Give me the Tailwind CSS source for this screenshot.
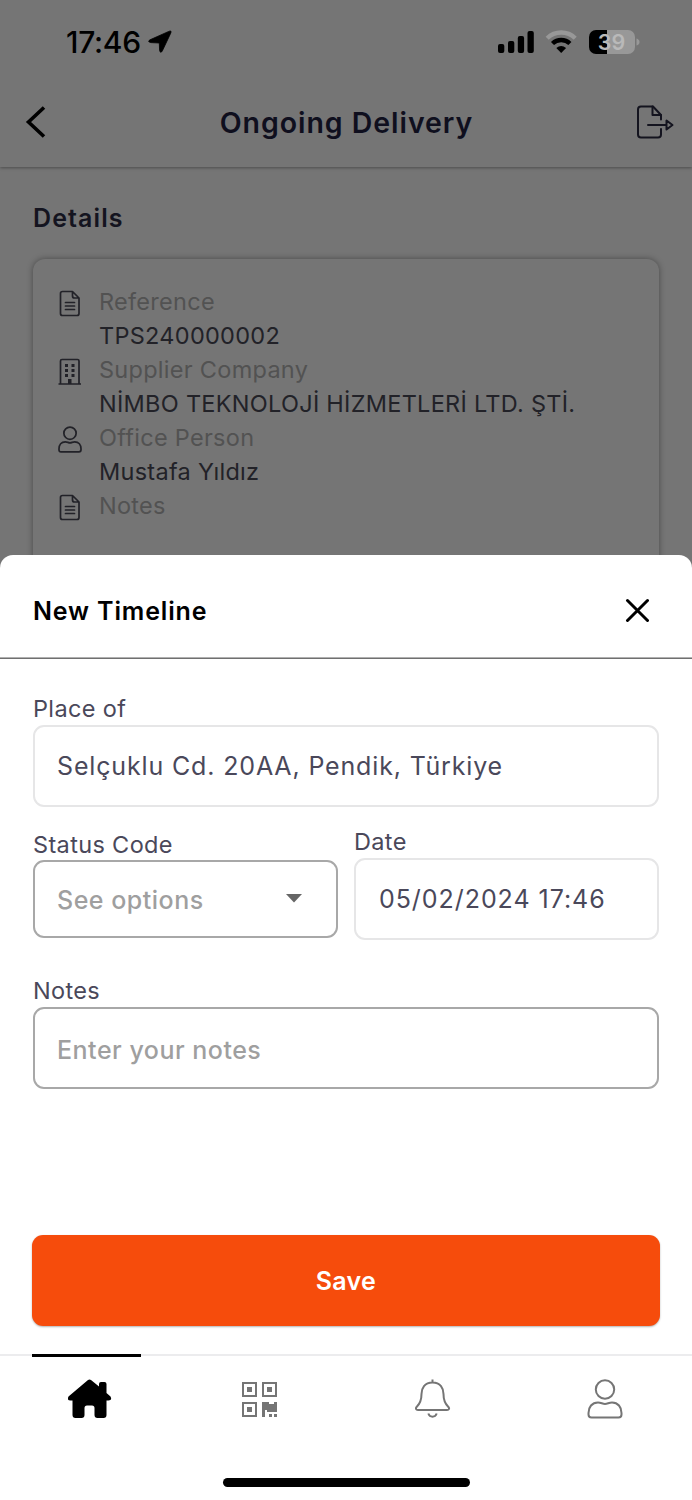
<!DOCTYPE html>
<html lang="en">
<head>
<meta charset="utf-8">
<title>Ongoing Delivery</title>
<script src="https://cdn.jsdelivr.net/npm/@tailwindcss/browser@4"></script>
</head>
<body class="bg-white">
<svg class="hidden">
  <symbol id="doc" viewBox="0 0 24 28"><g fill="none" stroke="currentColor" stroke-width="1.7" stroke-linejoin="round" stroke-linecap="round"><path d="M4.500 1.500H14.500L21 8V23.500Q21 25.500 19 25.500H4.500Q2.500 25.500 2.500 23.500V3.500Q2.500 1.500 4.500 1.500ZM14.500 1.500V6Q14.500 8 16.500 8H21"/><path d="M7.500 12.500h9M7.500 16h9M7.500 19.500h9"/></g></symbol>
  <symbol id="person" viewBox="0 0 36 40"><g fill="none" stroke="currentColor" stroke-linejoin="round"><circle cx="18" cy="10.500" r="9.200"/><path d="M11 23.500C14 23.500 15.500 25 18 25S22 23.500 25 23.500C31 23.500 34.500 28 34.500 34V35.500Q34.500 38.500 31.500 38.500H4.500Q1.500 38.500 1.500 35.500V34C1.500 28 5 23.500 11 23.500Z"/></g></symbol>
</svg>
<div class="flex h-[1500px] w-[692px] flex-col overflow-hidden bg-[#757575] font-['Inter',sans-serif]">
  <section class="flex h-[555px] shrink-0 flex-col overflow-hidden">
    <header class="h-[167px] shrink-0 shadow-[0_1px_3px_rgba(0,0,0,0.35)]">
      <div class="flex h-[83px] items-center pl-[66px] pr-[52px]">
        <span class="w-[82px] text-[30px] font-medium leading-none tracking-[-0.3px] text-black">17:46</span>
        <svg class="h-[24px] w-[24px]" viewBox="0 0 24 24"><path d="M20.800 1.400Q24 0 22.700 3.200L14.400 20.800Q12.500 24 11.600 20.500L11.300 13L2.800 12.600Q-1 11.800 2 9.800Z" fill="#000" stroke="#000" stroke-width=".8" stroke-linejoin="round"/></svg>
        <div class="ml-auto flex items-center">
          <svg class="h-[24px] w-[142px]" viewBox="498 29 142 24">
            <rect x="498" y="43" width="6.300" height="9" rx="2"/><rect x="508" y="40" width="6.300" height="12" rx="2"/><rect x="517.800" y="35" width="6.300" height="17" rx="2"/><rect x="527.500" y="30" width="6.300" height="22" rx="2"/>
            <path d="M547.200 37.200A20 20 0 0 1 575.200 37.200" fill="none" stroke="#989898" stroke-width="4.400"/>
            <path d="M552.500 42.500A12.500 12.500 0 0 1 569.900 42.500" fill="none" stroke="#000" stroke-width="4.400"/>
            <path d="M556.300 47Q561.200 42.800 566.100 47L561.200 52Z"/>
            <path d="M596 29h11v24h-11a7 7 0 0 1-7-7v-10a7 7 0 0 1 7-7z"/>
            <path d="M607 29h21a7 7 0 0 1 7 7v10a7 7 0 0 1-7 7h-21z" fill="#989898"/>
            <path d="M636.500 37.500q3 1 3 3.500t-3 3.500z" fill="#989898"/>
            <text x="611.500" y="48.700" text-anchor="middle" font-size="21.500" font-weight="600" fill="#b9b9b9">39</text>
          </svg>
        </div>
      </div>
      <div class="flex h-[78px] items-center justify-between pl-[25px] pr-[18px]">
        <svg class="h-[32px] w-[32px]" viewBox="0 0 32 32"><path d="M19 1.500L3.500 16L19 30.500" fill="none" stroke="#000" stroke-width="3.600"/></svg>
        <h1 class="pt-[3px] text-[28.5px] font-semibold leading-none tracking-[0.95px] text-[#0f0f1e]">Ongoing Delivery</h1>
        <svg class="h-[34px] w-[38px]" viewBox="0 0 38 34"><g fill="none" stroke="#14141f" stroke-width="2" stroke-linejoin="round" stroke-linecap="round"><path d="M25 14.500V10L17 1.500H5Q2 1.500 2 4.500V29.500Q2 32.500 5 32.500H22Q25 32.500 25 29.500V24"/><path d="M16.500 1.500V10H25M12 20H30M30.500 15.500V24.500L36.500 20Z"/></g></svg>
      </div>
    </header>
    <main class="flex flex-col px-[33px] pt-[34px]">
      <h2 class="h-[34px] text-[25px] font-semibold leading-[34px] tracking-[1.1px] text-[#141420]">Details</h2>
      <div class="mt-[24px] grid h-[400px] grid-cols-[66px_1fr] content-start rounded-[12px] pt-[26px] text-[23.5px] leading-[34px] tracking-[0.28px] text-[#222228] shadow-[0_0_6px_rgba(0,0,0,0.38)]">
        <svg class="ml-[25px] mt-[5px] h-[28px] w-[24px]"><use href="#doc"/></svg>
        <div><p class="text-[#525252]">Reference</p><p>TPS240000002</p></div>
        <svg class="ml-[25px] mt-[5px] h-[28px] w-[24px]" viewBox="0 0 24 28"><path d="M2.500 26V3Q2.500 1.500 4 1.500H19.500Q21 1.500 21 3V26M.500 26H23" fill="none" stroke="currentColor" stroke-width="1.700"/><path d="M7 6h3v3h-3zM13.500 6h3v3h-3zM7 11h3v3h-3zM13.500 11h3v3h-3zM7 16h3v3h-3zM13.500 16h3v3h-3zM10 21h3.500v5h-3.500z" fill="currentColor"/></svg>
        <div><p class="text-[#525252]">Supplier Company</p><p class="whitespace-nowrap">NİMBO TEKNOLOJİ HİZMETLERİ LTD. ŞTİ.</p></div>
        <svg class="ml-[25px] mt-[5px] h-[27px] w-[24px] stroke-[2.6]"><use href="#person"/></svg>
        <div><p class="text-[#525252]">Office Person</p><p>Mustafa Yıldız</p></div>
        <svg class="ml-[25px] mt-[5px] h-[28px] w-[24px]"><use href="#doc"/></svg>
        <div><p class="text-[#525252]">Notes</p></div>
      </div>
    </main>
  </section>

  <section class="flex h-[799px] shrink-0 flex-col rounded-t-[13px] bg-white">
    <div class="flex h-[102px] shrink-0 items-center justify-between pl-[33px] pr-[43px] pt-[9px]">
      <h2 class="mt-[2px] text-[25px] font-semibold leading-none tracking-[0.85px] text-black">New Timeline</h2>
      <svg class="mb-[2px] h-[24px] w-[24px]" viewBox="0 0 24 24"><path d="M2.500 2.500L22.500 22.500M22.500 2.500L2.500 22.500" stroke="#000" stroke-width="3" stroke-linecap="round"/></svg>
    </div>
    <div class="h-[2px] shrink-0 border-b border-t border-b-[#6f6f6f] border-t-[#b0b0b0]"></div>
    <form class="flex flex-col px-[33px] text-[23.5px] tracking-[0.35px] text-[#4a485a]">
      <label class="mt-[33px] h-[33px] leading-[33px]">Place of</label>
      <div class="flex h-[82px] items-center rounded-[11px] border-2 border-[#e6e6e7] pl-[22px] pt-[2px] text-[25px] tracking-[0.85px]">Selçuklu Cd. 20AA, Pendik, Türkiye</div>
      <div class="mt-[18px] grid grid-cols-2 gap-4">
        <div class="flex flex-col pt-[3px]">
          <label class="h-[32px] pt-px leading-[32px]">Status Code</label>
          <div class="flex h-[78px] items-center justify-between rounded-[11px] border-2 border-[#a8a8a8] pl-[22px] pr-[34px] text-[25px] tracking-[0.5px] text-[#9f9f9f]"><span class="pt-[4px] font-medium">See options</span>
            <svg class="mb-px h-[9px] w-[16px]" viewBox="0 0 16 9"><path d="M0 0H16L8 8.500Z" fill="#666"/></svg></div>
        </div>
        <div class="flex flex-col">
          <label class="h-[33px] leading-[33px]">Date</label>
          <div class="flex h-[82px] items-center rounded-[11px] border-2 border-[#e6e6e7] pl-[23px] pt-[2px] text-[25px] tracking-[0.95px]">05/02/2024 17:46</div>
        </div>
      </div>
      <label class="mt-[34px] h-[33px] leading-[33px]">Notes</label>
      <div class="flex h-[82px] items-center rounded-[11px] border-2 border-[#a8a8a8] pl-[22px] pt-[5px] text-[25px] font-medium tracking-[0.5px] text-[#9f9f9f]">Enter your notes</div>
      <button type="button" class="-mx-px mt-[146px] h-[91px] rounded-[11px] bg-[#f64c0c] pt-[2px] text-[25px] font-semibold tracking-[0.3px] text-white shadow-[0_1px_2px_rgba(0,0,0,0.3)]">Save</button>
    </form>
  </section>

  <nav class="flex h-[146px] shrink-0 flex-col border-t-2 border-[#ececee] bg-white text-[#757575]">
    <div class="-mt-[2px] ml-[32px] h-[3px] w-[109px] shrink-0 bg-black"></div>
    <div class="grid h-[84px] grid-cols-4 place-items-center">
      <svg class="ml-[6px] h-[40px] w-[44px]" viewBox="0.5 0 44 40"><path d="M20.500 1Q22 0 23.500 1L31.500 7.500V5Q31.500 3 33.500 3H37Q39 3 39 5V14L43 17.500Q45 21.500 41 21.500H39V36Q39 39 36 39H30Q27 39 27 36V29Q27 26.500 24.500 26.500H19.500Q17 26.500 17 29V36Q17 39 14 39H8Q5 39 5 36V21.500H3Q-1 21.500 1 17.500Z" fill="#000"/></svg>
      <svg class="h-[35px] w-[35px]" viewBox="0 0 35 35"><g fill="none" stroke="currentColor" stroke-width="2"><path d="M1 1h13v13H1zM21 1h13v13H21zM1 21h13v13H1z"/></g><path fill="currentColor" d="M5 5h5v5H5zM25 5h5v5h-5zM5 25h5v5H5zM20 20h7v2h5v-2h3v10h-10v-2h-2v7h-3zM27 32h3v3h-3zM32 32h3v3h-3z"/></svg>
      <svg class="h-[40px] w-[36px]" viewBox="0.5 0 36 40"><path d="M18 .500V3M13.800 34.500Q15 37.700 18 37.700T22.200 34.500M18 3.500C10 3.500 7 9.500 7 15C7 22 5.500 24.500 2.500 27.500C.500 29.500 1.500 31 3.500 31H32.500C34.500 31 35.500 29.500 33.500 27.500C30.500 24.500 29 22 29 15C29 9.500 26 3.500 18 3.500Z" fill="none" stroke="currentColor" stroke-width="2"/></svg>
      <svg class="mr-px h-[40px] w-[36px] stroke-2"><use href="#person"/></svg>
    </div>
    <div class="mx-auto mt-[37px] h-[9px] w-[247px] shrink-0 rounded-full bg-black"></div>
  </nav>
</div>
</body>
</html>
